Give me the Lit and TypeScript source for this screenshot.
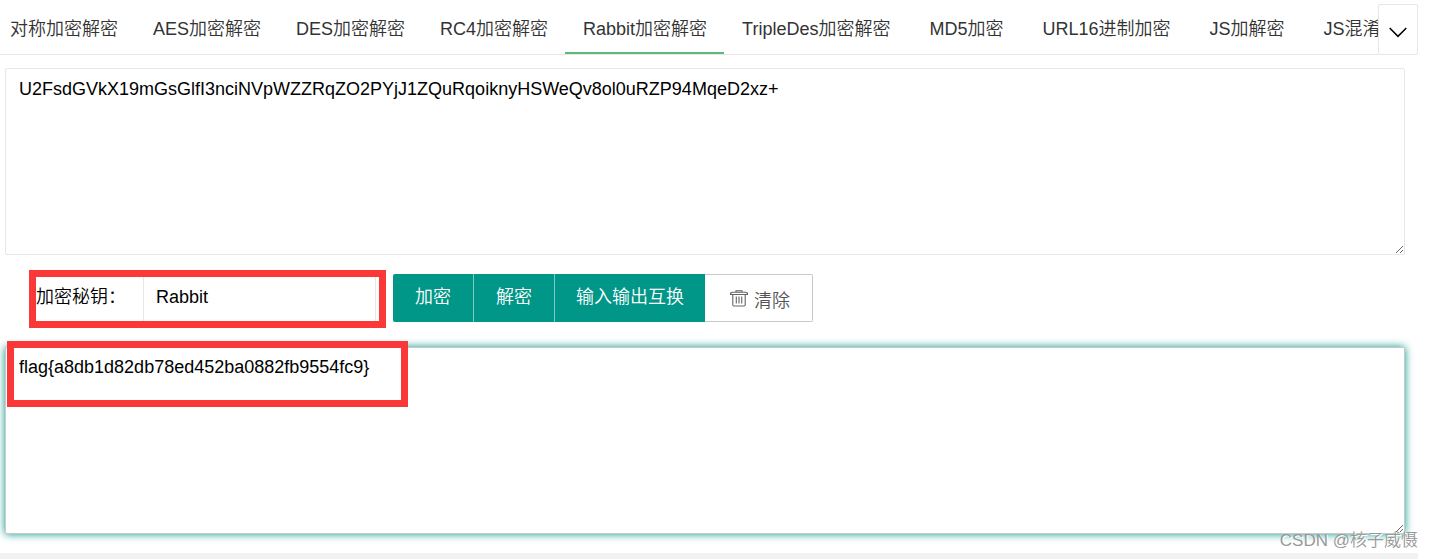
import { LitElement, html, css } from "lit";
import { customElement, state } from "lit/decorators.js";
import { classMap } from "lit/directives/class-map.js";

interface Tab {
  label: string;
  spaced?: boolean;
}

const TABS: Tab[] = [
  { label: "对称加密解密" },
  { label: "AES加密解密" },
  { label: "DES加密解密" },
  { label: "RC4加密解密" },
  { label: "Rabbit加密解密" },
  { label: "TripleDes加密解密", spaced: true },
  { label: "MD5加密", spaced: true },
  { label: "URL16进制加密", spaced: true },
  { label: "JS加解密", spaced: true },
  { label: "JS混淆加密", spaced: true },
];

@customElement("app-root")
export class AppRoot extends LitElement {
  static styles = css`
    :host {
      display: block;
      position: relative;
      margin-right: 15px;
      font-family: "Liberation Sans", "Noto Sans CJK SC", sans-serif;
      font-size: 18px;
      line-height: 24px;
      font-weight: 350;
      color: #000;
    }
    * {
      box-sizing: border-box;
    }
    button,
    input,
    textarea {
      font: inherit;
      color: inherit;
      margin: 0;
    }
    .header {
      display: flex;
      padding-top: 4px;
    }
    .tabs {
      display: flex;
      flex: 1;
      min-width: 0;
      overflow: hidden;
      border-bottom: 1px solid #e6e6e6;
    }
    .strip {
      display: flex;
      margin-left: -8px;
    }
    .tab {
      flex: none;
      height: 50px;
      padding: 2px 17px 0 18px;
      border: 0;
      border-bottom: 2px solid transparent;
      background: none;
      color: #333;
      white-space: nowrap;
      cursor: pointer;
    }
    .active {
      border-bottom-color: #5fb878;
    }
    .spaced {
      margin-right: 4px;
    }
    .more {
      display: flex;
      align-items: center;
      justify-content: center;
      width: 40px;
      height: 51px;
      padding: 6px 0 0;
      border: 1px solid #e6e6e6;
      border-radius: 2px;
      background: #fff;
      cursor: pointer;
    }
    .panel {
      padding: 13px 13px 19px 5px;
    }
    .text {
      display: block;
      width: 100%;
      height: 187px;
      padding: 8px 13px;
      border: 1px solid #e6e6e6;
      border-radius: 2px;
      background: #fff;
      resize: vertical;
      outline: none;
    }
    .result {
      padding-top: 7px;
      border-color: #c9c9c9;
      box-shadow: 0 0 8px #009688;
    }
    .marked {
      position: relative;
    }
    .mark {
      position: absolute;
      border: 7px solid #fb3838;
      pointer-events: none;
    }
    .mark-key {
      inset: -4px -10px -6px 24px;
    }
    .mark-result {
      top: -6px;
      left: 2px;
      width: 401px;
      height: 66px;
    }
    .row {
      display: flex;
      padding: 19px 0 25px;
    }
    .field {
      display: flex;
      width: 371px;
      margin-right: 17px;
    }
    .label {
      width: 138px;
      padding: 11px 0 0 31px;
    }
    .key {
      flex: 1;
      min-width: 0;
      height: 48px;
      padding: 0 12px 2px;
      border: 1px solid #e6e6e6;
      border-radius: 2px;
      outline: none;
    }
    .group {
      display: flex;
    }
    .btn {
      height: 48px;
      padding: 0 22px 2px;
      border: 0;
      border-right: 1px solid #80cbc4;
      background: #009688;
      color: #fff;
      white-space: nowrap;
      cursor: pointer;
    }
    .first {
      border-radius: 2px 0 0 2px;
    }
    .last {
      padding: 0 21px 2px;
      border-right: 0;
    }
    .clear {
      display: flex;
      align-items: center;
      gap: 6px;
      padding: 5px 22px 0 25px;
      border: 1px solid #c9c9c9;
      border-left: 0;
      border-radius: 0 2px 2px 0;
      background: #fff;
      color: #555;
    }
    .trash {
      margin-top: -4px;
    }
    .footer {
      height: 6px;
      background: #f2f2f2;
    }
    .watermark {
      position: absolute;
      right: 0;
      bottom: 6px;
      font-size: 17px;
      color: #999;
      text-shadow: 1px 1px 0 #fff;
      pointer-events: none;
    }
  `;

  @state() private active = 4;
  @state() private source =
    "U2FsdGVkX19mGsGlfI3nciNVpWZZRqZO2PYjJ1ZQuRqoiknyHSWeQv8ol0uRZP94MqeD2xz+";
  @state() private result = "flag{a8db1d82db78ed452ba0882fb9554fc9}";

  private swap() {
    [this.source, this.result] = [this.result, this.source];
  }

  private clear() {
    this.source = "";
    this.result = "";
  }

  render() {
    return html`
      <header class="header">
        <nav class="tabs">
          <div class="strip">
            ${TABS.map(
              (tab, i) => html`<button
                class=${classMap({ tab: true, active: i === this.active, spaced: !!tab.spaced })}
                @click=${() => (this.active = i)}
              >${tab.label}</button>`
            )}
          </div>
        </nav>
        <button class="more" aria-label="更多">
          <svg width="18" height="11" viewBox="0 0 18 11" fill="none" stroke="#000" stroke-width="1.5">
            <path d="M0.7 1L9 9.4L17.3 1" />
          </svg>
        </button>
      </header>
      <main class="panel">
        <textarea class="text" aria-label="输入" spellcheck="false" .value=${this.source}></textarea>
        <div class="row">
          <div class="field marked">
            <label class="label" for="key">加密秘钥：</label>
            <input class="key" id="key" value="Rabbit" />
            <span class="mark mark-key"></span>
          </div>
          <div class="group">
            <button class="btn first">加密</button>
            <button class="btn">解密</button>
            <button class="btn last" @click=${this.swap}>输入输出互换</button>
            <button class="btn clear" @click=${this.clear}>
              <svg class="trash" width="18" height="17" viewBox="0 0 18 17" fill="none" stroke="#666" stroke-width="1.1">
                <path d="M0.5 4.5V3.2L2.4 2.2H15.6L17.5 3.2V4.5ZM6 2V0.8H12V2M2.8 4.6V14.8Q2.8 16 4 16H14Q15.2 16 15.2 14.8V4.6M6.3 6.5V13.6M9 6.5V13.6M11.7 6.5V13.6" />
              </svg>
              <span>清除</span>
            </button>
          </div>
        </div>
        <div class="marked">
          <textarea class="text result" aria-label="输出" spellcheck="false" .value=${this.result}></textarea>
          <span class="mark mark-result"></span>
        </div>
      </main>
      <footer class="footer"></footer>
      <span class="watermark">CSDN @核子威慑</span>
    `;
  }
}
